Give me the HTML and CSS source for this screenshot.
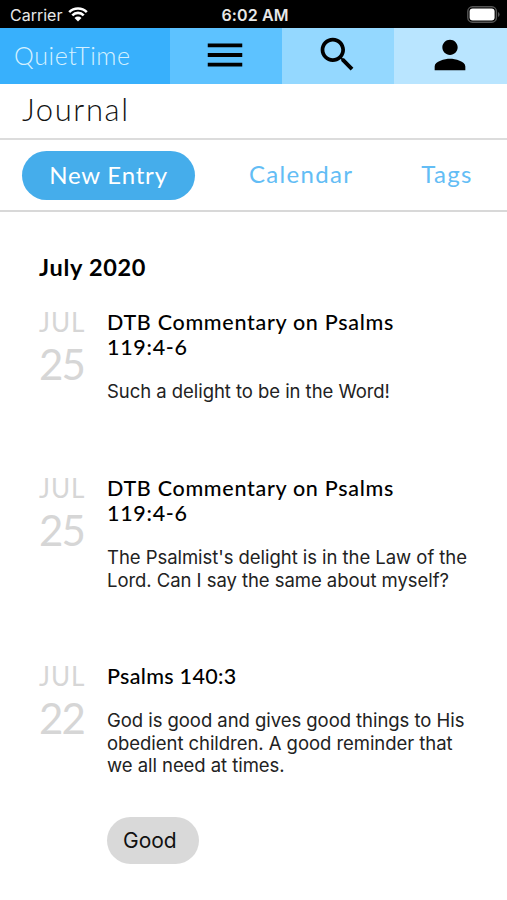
FILE: index.html
```html
<!DOCTYPE html>
<html lang="en">
  <head>
    <meta charset="UTF-8" />
    <meta name="viewport" content="width=device-width, initial-scale=1.0" />
    <title>QuietTime</title>
    <link rel="stylesheet" href="styles.css">
  </head>
  <body>
    <div class="status-bar">
      <div class="carrier">
        <span class="carrier-name">Carrier</span>
        <svg class="wifi" viewBox="0 0 20 15" width="20" height="15">
          <path d="M1.2 5.2a12.4 12.4 0 0 1 17.6 0" />
          <path d="M4.3 8.3a8 8 0 0 1 11.4 0" />
          <path class="wifi-dot" d="M6.5 11a5 5 0 0 1 7 0L10 14.6z" />
        </svg>
      </div>
      <span class="clock">6:02 AM</span>
      <div class="power">
        <svg width="33" height="17" viewBox="0 0 33 17">
          <rect x="0.8" y="0.8" width="28.6" height="15.4" rx="4.6" fill="none" stroke="#555" stroke-width="1.4" />
          <rect x="2.6" y="2.6" width="25" height="11.8" rx="3" fill="#fff" />
          <path d="M31 6v5q1.6-.6 1.6-2.5T31 6z" fill="#555" />
        </svg>
      </div>
    </div>

    <nav class="top-nav">
      <a class="brand"><span class="brand-name">QuietTime</span></a>
      <a class="nav-menu">
        <svg width="46" height="46" viewBox="0 0 24 24"><path d="M3 18h18v-2H3v2zm0-5h18v-2H3v2zm0-7v2h18V6H3z" /></svg>
      </a>
      <a class="nav-search">
        <svg width="45" height="45" viewBox="0 0 24 24"><path d="M15.500 14h-.79l-.28-.27C15.410 12.590 16 11.110 16 9.500 16 5.910 13.090 3 9.500 3S3 5.910 3 9.500 5.910 16 9.500 16c1.610 0 3.090-.59 4.230-1.570l.27.28v.79l5 4.990L20.490 19l-4.990-5zm-6 0C7.010 14 5 11.990 5 9.500S7.010 5 9.500 5 14 7.010 14 9.500 11.990 14 9.500 14z" /></svg>
      </a>
      <a class="nav-user">
        <svg width="46" height="46" viewBox="0 0 24 24"><path d="M12 12c2.210 0 4-1.790 4-4s-1.790-4-4-4-4 1.790-4 4 1.790 4 4 4zm0 2c-2.670 0-8 1.340-8 4v2h16v-2c0-2.660-5.330-4-8-4z" /></svg>
      </a>
    </nav>

    <header class="page-title">
      <h1>Journal</h1>
    </header>

    <div class="tabs">
      <button class="new-entry">New Entry</button>
      <a class="tab calendar">Calendar</a>
      <a class="tab tags">Tags</a>
    </div>

    <main class="journal">
      <h2 class="month">July 2020</h2>

      <article class="entry">
        <div class="entry-date">
          <span class="entry-month">JUL</span>
          <span class="entry-day">25</span>
        </div>
        <div class="entry-content">
          <h3>DTB Commentary on Psalms<br>119:4-6</h3>
          <p>Such a delight to be in the Word!</p>
        </div>
      </article>

      <article class="entry">
        <div class="entry-date">
          <span class="entry-month">JUL</span>
          <span class="entry-day">25</span>
        </div>
        <div class="entry-content">
          <h3>DTB Commentary on Psalms<br>119:4-6</h3>
          <p>The Psalmist's delight is in the Law of the<br>Lord. Can I say the same about myself?</p>
        </div>
      </article>

      <article class="entry">
        <div class="entry-date">
          <span class="entry-month">JUL</span>
          <span class="entry-day">22</span>
        </div>
        <div class="entry-content">
          <h3 class="short">Psalms 140:3</h3>
          <p>God is good and gives good things to His<br>obedient children. A good reminder that<br>we all need at times.</p>
          <span class="entry-tag">Good</span>
        </div>
      </article>
    </main>
  </body>
</html>
```

FILE: styles.css
```css
* {
  box-sizing: border-box;
}

body {
  margin: 0;
  height: 900px;
  overflow: hidden;
  background: #fff;
  color: #111;
  font-family: Lato, sans-serif;
}

h1,
h2,
h3,
p {
  margin: 0;
}

.status-bar {
  display: grid;
  grid-template-columns: 1fr auto 1fr;
  align-items: center;
  height: 28px;
  padding: 1px 7px 0 10px;
  background: #000;
  color: #e8e8e8;
  font-family: Inter, sans-serif;
  font-size: 16px;
}

.carrier {
  display: flex;
  align-items: center;
  gap: 6px;
}

.wifi {
  fill: none;
  stroke: #fff;
  stroke-width: 2.6;
}

.wifi .wifi-dot {
  fill: #fff;
  stroke: none;
}

.clock {
  font-weight: 600;
  font-size: 16px;
  letter-spacing: 0.1px;
}

.power {
  display: flex;
  justify-content: flex-end;
}

.top-nav {
  display: grid;
  grid-template-columns: 170px 112px 112px 113px;
  height: 55.5px;
}

.top-nav a {
  display: flex;
  align-items: center;
  justify-content: center;
  padding: 0 2px 2px 0;
}

.top-nav .brand {
  justify-content: flex-start;
  padding-left: 14px;
  background: #38b0fc;
  color: #d5f0ff;
  font-size: 25px;
  font-weight: 300;
  letter-spacing: 0.6px;
}

.nav-menu {
  background: #5dc2ff;
}

.nav-search {
  background: #94d8ff;
}

.nav-user {
  background: #b9e5ff;
}

.page-title {
  height: 56.5px;
  padding: 6px 22px;
  border-bottom: 2px solid #dcdcdc;
}

.page-title h1 {
  font-size: 31px;
  font-weight: 300;
  line-height: 38px;
  letter-spacing: 1.6px;
}

.tabs {
  display: flex;
  height: 72px;
  padding: 11px 0 0 22px;
  border-bottom: 2px solid #d8d8d8;
  font-size: 24px;
  letter-spacing: 0.8px;
}

.new-entry {
  width: 173px;
  height: 49px;
  padding: 0 0 2px;
  border: 0;
  border-radius: 25px;
  background: #45adeb;
  color: #fff;
  font: inherit;
  letter-spacing: inherit;
}

.tab {
  line-height: 45px;
  color: #63bdf5;
  letter-spacing: 1.3px;
}

.calendar {
  margin-left: 54px;
}

.tags {
  margin-left: 68px;
}

.journal {
  padding: 40px 20px 0 39px;
}

.month {
  color: #000;
  font-size: 23.5px;
  font-weight: 700;
  line-height: 30px;
  letter-spacing: 0.7px;
}

.entry {
  display: grid;
  grid-template-columns: 68px 1fr;
  margin-top: 27px;
  min-height: 139px;
}

.entry + .entry {
  margin-top: 0;
}

.entry:nth-of-type(1) {
  height: 166px;
}

.entry:nth-of-type(2) {
  height: 188px;
}

.entry-date {
  display: flex;
  flex-direction: column;
  color: #d6d6d6;
}

.entry-month {
  font-size: 26px;
  line-height: 27px;
  letter-spacing: 0.9px;
}

.entry-day {
  font-size: 42px;
  line-height: 56px;
  letter-spacing: -1.8px;
}

.entry h3 {
  padding-top: 1px;
  color: #000;
  font-size: 21.5px;
  font-weight: 500;
  line-height: 25px;
  letter-spacing: 0.7px;
}

.entry h3.short {
  letter-spacing: 0.3px;
}

.entry p {
  margin-top: 20px;
  color: #222;
  font-family: Inter, sans-serif;
  font-size: 18.5px;
  line-height: 22.7px;
  letter-spacing: -0.05px;
  white-space: nowrap;
}

.entry-tag {
  display: inline-block;
  margin-top: 40px;
  width: 92px;
  height: 47px;
  padding-left: 16px;
  border-radius: 24px;
  background: #d9d9d9;
  font-family: Inter, sans-serif;
  font-size: 21px;
  line-height: 47px;
}
```
